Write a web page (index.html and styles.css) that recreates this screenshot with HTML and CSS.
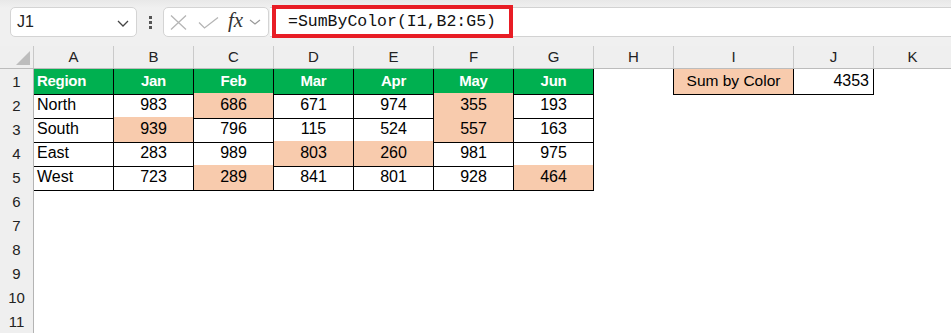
FILE: index.html
```html
<!DOCTYPE html>
<html lang="en">
<head>
  <meta charset="UTF-8">
  <title>Sum by Color</title>
  <link rel="stylesheet" href="styles.css">
</head>
<body>

<!-- Formula bar -->
<div class="topbar">
  <div class="namebox">
    <span>J1</span>
    <svg width="12" height="7" viewBox="0 0 12 7"><path d="M1 1 L6 6 L11 1" fill="none" stroke="#444" stroke-width="1.3"/></svg>
  </div>
  <div class="dots"><i></i><i></i><i></i></div>
  <div class="fxbox">
    <svg class="ico-x" width="17" height="15" viewBox="0 0 17 15"><path d="M1 0.5 L16 14.5 M16 0.5 L1 14.5" stroke="#b5b5b5" stroke-width="1.3"/></svg>
    <svg class="ico-ok" width="21" height="12" viewBox="0 0 21 12"><path d="M1 5.5 L6.5 11 L20 0.5" fill="none" stroke="#b5b5b5" stroke-width="1.3"/></svg>
    <span class="fx">fx</span>
    <svg width="12" height="6" viewBox="0 0 12 6"><path d="M1 1 L6 5 L11 1" fill="none" stroke="#999" stroke-width="1.2"/></svg>
  </div>
  <div class="formula">
    <div class="formula-box">=SumByColor(I1,B2:G5)</div>
  </div>
</div>

<!-- Sheet -->
<div class="sheet">
  <div class="row colheads">
    <div class="corner"><svg width="14" height="14" viewBox="0 0 14 14"><path d="M14 0 L14 14 L0 14 Z" fill="#bdbdbd"/></svg></div>
    <div class="ch">A</div><div class="ch">B</div><div class="ch">C</div><div class="ch">D</div>
    <div class="ch">E</div><div class="ch">F</div><div class="ch">G</div><div class="ch">H</div>
    <div class="ch">I</div><div class="ch">J</div><div class="ch last">K</div>
  </div>

  <div class="row">
    <div class="rh">1</div>
    <div class="c head left">Region</div>
    <div class="c head">Jan</div><div class="c head">Feb</div><div class="c head">Mar</div>
    <div class="c head">Apr</div><div class="c head">May</div><div class="c head">Jun</div>
    <div class="e"></div>
    <div class="c peach label">Sum by Color</div>
    <div class="c right">4353</div>
  </div>

  <div class="row">
    <div class="rh">2</div>
    <div class="c left">North</div>
    <div class="c">983</div><div class="c peach">686</div><div class="c">671</div>
    <div class="c">974</div><div class="c peach">355</div><div class="c">193</div>
  </div>

  <div class="row">
    <div class="rh">3</div>
    <div class="c left">South</div>
    <div class="c peach">939</div><div class="c">796</div><div class="c">115</div>
    <div class="c">524</div><div class="c peach">557</div><div class="c">163</div>
  </div>

  <div class="row">
    <div class="rh">4</div>
    <div class="c left">East</div>
    <div class="c">283</div><div class="c">989</div><div class="c peach">803</div>
    <div class="c peach">260</div><div class="c">981</div><div class="c">975</div>
  </div>

  <div class="row">
    <div class="rh">5</div>
    <div class="c left">West</div>
    <div class="c">723</div><div class="c peach">289</div><div class="c">841</div>
    <div class="c">801</div><div class="c">928</div><div class="c peach">464</div>
  </div>

  <div class="row"><div class="rh">6</div></div>
  <div class="row"><div class="rh">7</div></div>
  <div class="row"><div class="rh">8</div></div>
  <div class="row"><div class="rh">9</div></div>
  <div class="row"><div class="rh">10</div></div>
  <div class="row"><div class="rh">11</div></div>
</div>

</body>
</html>
```

FILE: styles.css
```css
body {
  margin: 0;
  font-family: "Liberation Sans", Arial, sans-serif;
  background: #fff;
  color: #000;
  overflow: hidden;
}

/* ---- formula bar ---- */
.topbar {
  display: flex;
  align-items: flex-start;
  height: 46px;
  background: linear-gradient(#e8e8e8, #f0f0f0 8px);
}

.namebox {
  box-sizing: border-box;
  display: flex;
  align-items: center;
  justify-content: space-between;
  width: 127px;
  height: 30px;
  margin: 7px 0 0 10px;
  padding: 0 7px 0 6px;
  background: #fff;
  border: 1px solid #d4d4d4;
  border-radius: 5px;
  font-family: "Liberation Sans", Arial, sans-serif;
  font-size: 16px;
  color: #222;
}

.namebox svg {
  margin-top: 2px;
}

.dots {
  display: flex;
  flex-direction: column;
  align-items: center;
  gap: 2px;
  width: 26px;
  margin-top: 16px;
}

.dots i {
  width: 3px;
  height: 3px;
  background: #555;
}

.fxbox {
  box-sizing: border-box;
  display: flex;
  align-items: center;
  width: 106px;
  height: 30px;
  margin-top: 7px;
  padding-left: 6px;
  background: #fff;
  border: 1px solid #d4d4d4;
  border-radius: 5px;
}

.ico-x {
  margin-right: 11px;
}

.ico-ok {
  margin-right: 9px;
  margin-top: 2px;
}

.fx {
  font-family: "Liberation Serif", "Times New Roman", serif;
  font-style: italic;
  font-size: 21px;
  color: #333;
  margin-right: 6px;
  margin-top: -3px;
}

.formula {
  flex: 1;
  box-sizing: border-box;
  height: 30px;
  margin: 7px 0 0 1px;
  background: #fff;
  border-top: 1px solid #d2d2d2;
  border-bottom: 1px solid #d2d2d2;
}

.formula-box {
  box-sizing: border-box;
  width: 241px;
  height: 33px;
  margin: -3px 0 0 2px;
  padding: 2px 0 0 12px;
  border: 4px solid #e81d25;
  font-family: "Liberation Mono", "Courier New", monospace;
  font-size: 16.5px;
  line-height: 22px;
  color: #111;
}

/* ---- sheet ---- */
.row {
  display: grid;
  grid-template-columns: 34px repeat(8, 80px) 120px 80px 1fr;
  height: 24px;
}

.colheads {
  height: 23px;
  background: #efefef;
  border-bottom: 1px solid #bcbcbc;
  box-sizing: border-box;
}

.corner {
  display: flex;
  align-items: flex-end;
  justify-content: flex-end;
  padding: 0 3px 3px 0;
  border-right: 1px solid #c8c8c8;
}

.ch {
  border-right: 1px solid #cacaca;
  text-align: center;
  font-size: 15px;
  line-height: 22px;
  color: #222;
}

.ch.last {
  border-right: none;
}

.rh {
  box-sizing: border-box;
  background: #efefef;
  border-right: 1px solid #b4b4b4;
  border-bottom: 1px solid #bdbdbd;
  text-align: center;
  font-size: 15px;
  line-height: 25px;
  color: #222;
}

.c {
  box-sizing: border-box;
  border-right: 1px solid #000;
  border-bottom: 1px solid #000;
  text-align: center;
  font-size: 16px;
  line-height: 24px;
}

.c.left {
  text-align: left;
  padding-left: 3px;
}

.c.right {
  text-align: right;
  padding-right: 4px;
}

.c.head {
  background: #00b050;
  color: #fff;
  font-weight: bold;
  font-size: 15px;
  letter-spacing: -0.3px;
}

.c.peach {
  background: #f8cbad;
}

.c.label {
  font-size: 15.5px;
  box-shadow: -1px 0 0 #000;
}
```
